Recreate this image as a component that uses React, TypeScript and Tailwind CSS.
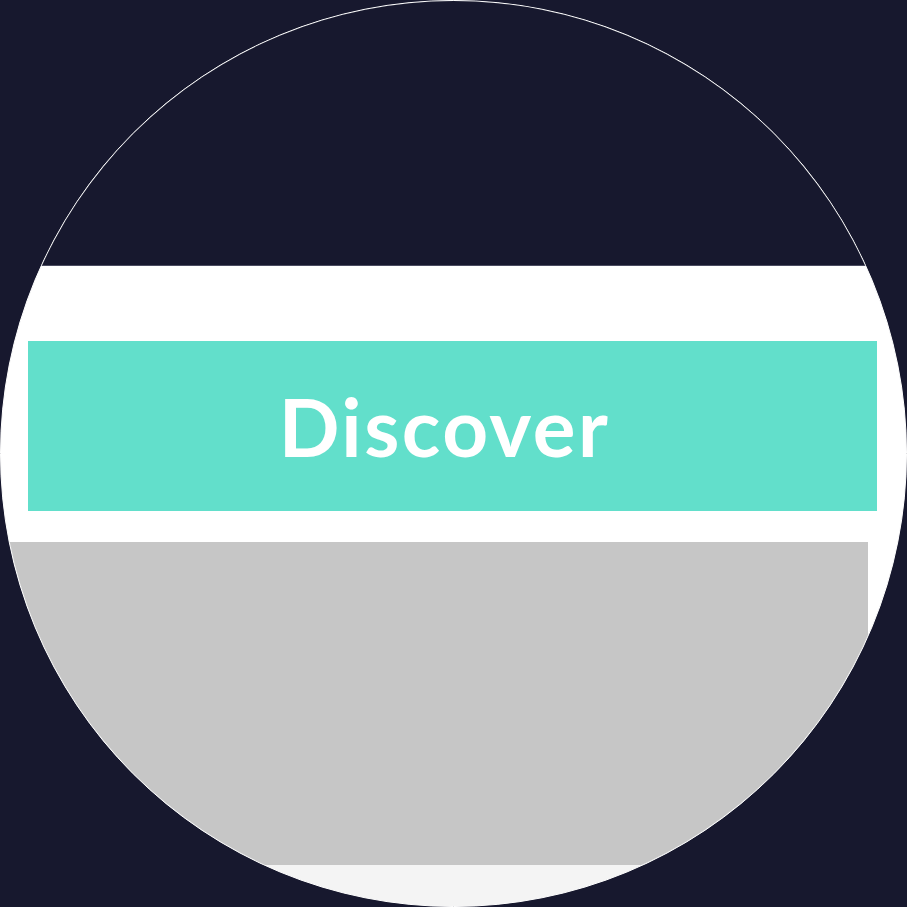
export default function App() {
  return (
    <div className="h-[907px] w-[907px] bg-[#17182e]">
      <div className="flex h-[907px] w-[907px] flex-col overflow-hidden rounded-full border border-white bg-[#f4f4f4]">
        <div className="h-[265px] shrink-0 border-b border-[#4a4b60] bg-[#17182e]" />
        <div className="shrink-0 bg-white pt-[75px]">
          <div className="ml-[27px] flex h-[170px] w-[849px] items-center justify-center bg-[#62dfcb] pr-[16px]">
            <span className="font-['Lato',sans-serif] text-[80px] font-bold leading-none tracking-[2.5px] text-white">Discover</span>
          </div>
          <div className="mt-[31px] h-[323px] w-[867px] bg-[#c6c6c6]" />
        </div>
        <div className="flex-1 bg-[#f4f4f4]" />
      </div>
    </div>
  )
}
